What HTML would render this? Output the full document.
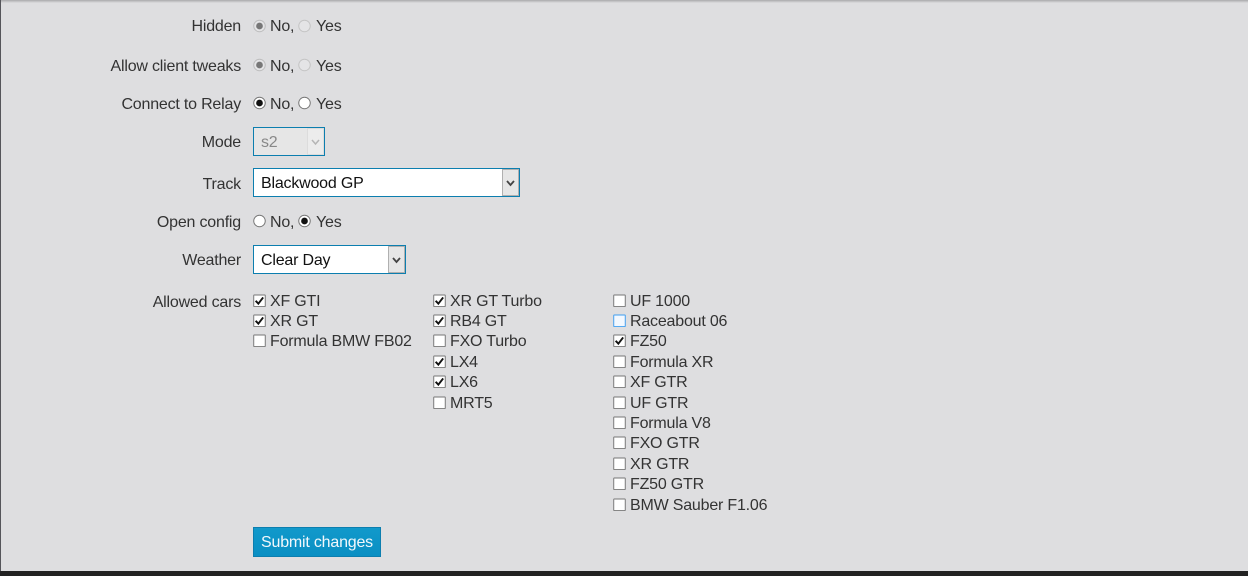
<!DOCTYPE html>
<html><head><meta charset="utf-8">
<style>
html,body{margin:0;padding:0}
body{width:1248px;height:576px;background:#dedee0;overflow:hidden;position:relative;font-family:"Liberation Sans",sans-serif;font-size:16px;letter-spacing:-.2px;color:#333}
.t{position:absolute;white-space:nowrap;line-height:24px;height:24px}
.l{position:absolute;right:1007px;white-space:nowrap;line-height:24px;height:24px;text-align:right}
.r{position:absolute;width:11px;height:11px;border:1px solid #767676;border-radius:50%;background:#fff;transform:translateY(-.5px) scale(.96)}
.r.on::after{content:"";position:absolute;left:2px;top:2px;width:7px;height:7px;border-radius:50%;background:#111}
.r.dis{border-color:#c4c4c4;background:#e4e4e6}
.r.dis.on{border-color:#bdbdbd}
.r.dis.on::after{background:#777}
.c{position:absolute;width:11px;height:11px;border:1px solid #767676;background:#fff;border-radius:1px;transform:translateY(.3px) scale(.96)}
.c svg{position:absolute;left:0;top:0}
.c.h{border-color:#3f9ef0;background:#f2f8ff}
.s{position:absolute;box-sizing:border-box;border:1px solid #0c7eaf;background:#fff;color:#111;line-height:29px;padding-left:7px}
.a{position:absolute;top:0;right:0;bottom:0;width:17px;box-sizing:border-box;border:1px solid #b0b0b0;background:#e6e6e6}
.a svg{position:absolute;left:3px;top:9px}
.btn{position:absolute;left:253px;top:527px;width:128px;height:30px;box-sizing:border-box;border:1px solid #0c7eaf;background:linear-gradient(#1199cb,#0a8fc3);color:#f2f8fc;text-align:center;line-height:29px}
</style></head><body>
<div style="position:absolute;left:0;top:0;width:1248px;height:3px;background:linear-gradient(#a9a9ab,#dedee0)"></div>
<div style="position:absolute;left:0;top:0;width:1px;height:576px;background:#55555a"></div>
<div style="position:absolute;left:0;top:571px;width:1248px;height:5px;background:#222"></div>

<div class="l" style="top:15px">Hidden</div>
<div class="r dis on" style="left:253px;top:20px"></div><div class="t" style="left:270px;top:15px">No,</div>
<div class="r dis" style="left:298px;top:20px"></div><div class="t" style="left:316px;top:15px">Yes</div>

<div class="l" style="top:55px">Allow client tweaks</div>
<div class="r dis on" style="left:253px;top:59px"></div><div class="t" style="left:270px;top:55px">No,</div>
<div class="r dis" style="left:298px;top:59px"></div><div class="t" style="left:316px;top:55px">Yes</div>

<div class="l" style="top:93px">Connect to Relay</div>
<div class="r on" style="left:253px;top:97px"></div><div class="t" style="left:270px;top:93px">No,</div>
<div class="r" style="left:298px;top:97px"></div><div class="t" style="left:316px;top:93px">Yes</div>

<div class="l" style="top:131px">Mode</div>
<div class="s" style="left:253px;top:127px;width:72px;height:29px;background:#e6e6e6;color:#888">s2<div class="a" style="border-color:#dcdcdc;background:#ececec"><svg width="9" height="9"><path d="M1 2l3.500 4 3.500-4" fill="none" stroke="#b5b5b5" stroke-width="1.500"/></svg></div></div>

<div class="l" style="top:173px">Track</div>
<div class="s" style="left:253px;top:168px;width:267px;height:29px">Blackwood GP<div class="a"><svg width="9" height="9"><path d="M1 2l3.500 4 3.500-4" fill="none" stroke="#444" stroke-width="1.800"/></svg></div></div>

<div class="l" style="top:211px">Open config</div>
<div class="r" style="left:253px;top:215px"></div><div class="t" style="left:270px;top:211px">No,</div>
<div class="r on" style="left:298px;top:215px"></div><div class="t" style="left:316px;top:211px">Yes</div>

<div class="l" style="top:249px">Weather</div>
<div class="s" style="left:253px;top:245px;width:153px;height:29px">Clear Day<div class="a"><svg width="9" height="9"><path d="M1 2l3.500 4 3.500-4" fill="none" stroke="#444" stroke-width="1.800"/></svg></div></div>

<div class="l" style="top:291px">Allowed cars</div>

<div class="c" style="left:253px;top:294px"><svg width="11" height="11"><path d="M1.500 5.500l2.800 3 5-6.500" fill="none" stroke="#111" stroke-width="2"/></svg></div><div class="t" style="left:270px;top:290px">XF GTI</div>
<div class="c" style="left:253px;top:314px"><svg width="11" height="11"><path d="M1.500 5.500l2.800 3 5-6.500" fill="none" stroke="#111" stroke-width="2"/></svg></div><div class="t" style="left:270px;top:310px">XR GT</div>
<div class="c" style="left:253px;top:334px"></div><div class="t" style="left:270px;top:330px">Formula BMW FB02</div>

<div class="c" style="left:433px;top:294px"><svg width="11" height="11"><path d="M1.500 5.500l2.800 3 5-6.500" fill="none" stroke="#111" stroke-width="2"/></svg></div><div class="t" style="left:450px;top:290px">XR GT Turbo</div>
<div class="c" style="left:433px;top:314px"><svg width="11" height="11"><path d="M1.500 5.500l2.800 3 5-6.500" fill="none" stroke="#111" stroke-width="2"/></svg></div><div class="t" style="left:450px;top:310px">RB4 GT</div>
<div class="c" style="left:433px;top:334px"></div><div class="t" style="left:450px;top:330px">FXO Turbo</div>
<div class="c" style="left:433px;top:355px"><svg width="11" height="11"><path d="M1.500 5.500l2.800 3 5-6.500" fill="none" stroke="#111" stroke-width="2"/></svg></div><div class="t" style="left:450px;top:351px">LX4</div>
<div class="c" style="left:433px;top:375px"><svg width="11" height="11"><path d="M1.500 5.500l2.800 3 5-6.500" fill="none" stroke="#111" stroke-width="2"/></svg></div><div class="t" style="left:450px;top:371px">LX6</div>
<div class="c" style="left:433px;top:396px"></div><div class="t" style="left:450px;top:392px">MRT5</div>

<div class="c" style="left:613px;top:294px"></div><div class="t" style="left:630px;top:290px">UF 1000</div>
<div class="c h" style="left:613px;top:314px"></div><div class="t" style="left:630px;top:310px">Raceabout 06</div>
<div class="c" style="left:613px;top:334px"><svg width="11" height="11"><path d="M1.500 5.500l2.800 3 5-6.500" fill="none" stroke="#111" stroke-width="2"/></svg></div><div class="t" style="left:630px;top:330px">FZ50</div>
<div class="c" style="left:613px;top:355px"></div><div class="t" style="left:630px;top:351px">Formula XR</div>
<div class="c" style="left:613px;top:375px"></div><div class="t" style="left:630px;top:371px">XF GTR</div>
<div class="c" style="left:613px;top:396px"></div><div class="t" style="left:630px;top:392px">UF GTR</div>
<div class="c" style="left:613px;top:416px"></div><div class="t" style="left:630px;top:412px">Formula V8</div>
<div class="c" style="left:613px;top:436px"></div><div class="t" style="left:630px;top:432px">FXO GTR</div>
<div class="c" style="left:613px;top:457px"></div><div class="t" style="left:630px;top:453px">XR GTR</div>
<div class="c" style="left:613px;top:477px"></div><div class="t" style="left:630px;top:473px">FZ50 GTR</div>
<div class="c" style="left:613px;top:498px"></div><div class="t" style="left:630px;top:494px">BMW Sauber F1.06</div>

<div class="btn">Submit changes</div>
</body></html>
